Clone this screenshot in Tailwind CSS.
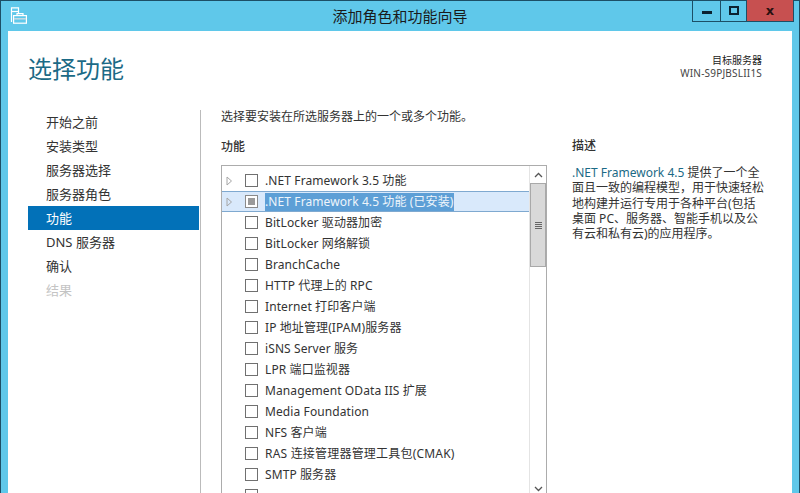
<!DOCTYPE html>
<html lang="zh-CN">
<head>
<meta charset="UTF-8">
<title>添加角色和功能向导</title>
<script src="https://cdn.jsdelivr.net/npm/@tailwindcss/browser@4"></script>
</head>
<body class="w-[800px] h-[493px] overflow-hidden bg-[#5fc8ea] font-['Noto_Sans','Noto_Sans_CJK_SC',sans-serif] text-[12px] text-[#333]">
  <div class="h-[493px] flex flex-col border-l border-t border-r border-[#1c4f66]">
    <!-- Title bar -->
    <div class="relative h-[30px] shrink-0 flex items-center justify-center text-[15px] text-[#1a1a1a]">
      <svg class="absolute left-[9px] top-[6px]" width="17" height="17" viewBox="0 0 17 17" fill="none" stroke="#fff" stroke-width="1.2">
        <path d="M1.5 15V0.8H8.5V6"/>
        <path d="M1.5 4.5H8.5"/>
        <rect x="3.6" y="8.6" width="12.8" height="7.6" fill="#5fc8ea"/>
        <path d="M7 8.5V6.6H13V8.5"/>
        <path d="M4 11.8H16" stroke="#c4dbe4" stroke-width="1.6"/>
      </svg>
      <span>添加角色和功能向导</span>
      <div class="absolute right-[5px] top-[-1px] flex h-[22px] border border-t-0 border-[#1c4f66]">
        <div class="w-[28px] flex items-center justify-center border-r border-[#1c4f66]"><div class="w-[10px] h-[3px] mt-[3px] bg-[#0b2230]"></div></div>
        <div class="w-[26px] flex items-center justify-center border-r border-[#1c4f66]"><div class="w-[10px] h-[9px] border-2 border-[#0b2230]"></div></div>
        <div class="w-[46px] flex items-center justify-center bg-[#c75050] font-bold text-[13px] text-[#2a1010] font-['DejaVu_Sans',sans-serif]">x</div>
      </div>
    </div>
    <!-- Window body -->
    <div class="flex-1 min-h-0 mx-[7px] bg-white overflow-hidden">
      <div class="h-[79px] flex justify-between pl-[20px] pr-[30px]">
        <h1 class="mt-[20px] text-[24px] leading-[36px] text-[#1b6a86]">选择功能</h1>
        <div class="mt-[23px] text-right text-[10px] leading-[13px]">
          <div class="text-[#222]">目标服务器</div>
          <div class="text-[#444] tracking-[0.2px]">WIN-S9PJBSLII1S</div>
        </div>
      </div>
      <div class="flex">
        <!-- Steps -->
        <ul class="w-[171px] ml-[20px] shrink-0">
          <li class="h-[24px] pl-[18px] leading-[24px] text-[13px]">开始之前</li>
          <li class="h-[24px] pl-[18px] leading-[24px] text-[13px]">安装类型</li>
          <li class="h-[24px] pl-[18px] leading-[24px] text-[13px]">服务器选择</li>
          <li class="h-[24px] pl-[18px] leading-[24px] text-[13px]">服务器角色</li>
          <li class="h-[24px] pl-[18px] leading-[24px] text-[13px] bg-[#0271b8] text-white">功能</li>
          <li class="h-[24px] pl-[18px] leading-[24px] text-[13px]">DNS 服务器</li>
          <li class="h-[24px] pl-[18px] leading-[24px] text-[13px]">确认</li>
          <li class="h-[24px] pl-[18px] leading-[24px] text-[13px] text-[#c4c4c4]">结果</li>
        </ul>
        <!-- Main -->
        <div class="flex-1 h-[400px] ml-px border-l border-[#bbb] pl-[20px] flex">
          <div class="w-[326px] shrink-0">
            <p class="mt-[-2px] leading-[18px] text-[#333]">选择要安装在所选服务器上的一个或多个功能。</p>
            <h2 class="mt-[12px] font-medium leading-[18px] text-[#333]">功能</h2>
            <div class="mt-[9px] h-[340px] border border-[#acacac] flex overflow-hidden">
              <div class="flex-1 pt-[4px] overflow-hidden tracking-[0.1px]">
                <div class="h-[21px] flex items-center">
                  <svg class="ml-[4px] mr-[12px]" width="7" height="10" viewBox="0 0 7 10" fill="none" stroke="#a6a6a6"><path d="M1 1L5.5 5L1 9Z"/></svg>
                  <div class="w-[13px] h-[13px] border border-[#707070] mr-[7px]"></div><span>.NET Framework 3.5 功能</span>
                </div>
                <div class="h-[21px] flex items-center bg-[#d9e9fb] border-y border-[#7fa9d0]">
                  <svg class="ml-[4px] mr-[12px]" width="7" height="10" viewBox="0 0 7 10" fill="none" stroke="#a6a6a6"><path d="M1 1L5.5 5L1 9Z"/></svg>
                  <div class="w-[13px] h-[13px] border border-[#8a8a8a] mr-[7px] flex items-center justify-center bg-white"><div class="w-[7px] h-[7px] bg-[#9a9a9a]"></div></div><span class="bg-[#5d9fd6] text-[#eef5fb]">.NET Framework 4.5 功能 (已安装)</span>
                </div>
                <div class="h-[21px] flex items-center pl-[23px]"><div class="w-[13px] h-[13px] border border-[#707070] mr-[7px]"></div><span>BitLocker 驱动器加密</span></div>
                <div class="h-[21px] flex items-center pl-[23px]"><div class="w-[13px] h-[13px] border border-[#707070] mr-[7px]"></div><span>BitLocker 网络解锁</span></div>
                <div class="h-[21px] flex items-center pl-[23px]"><div class="w-[13px] h-[13px] border border-[#707070] mr-[7px]"></div><span>BranchCache</span></div>
                <div class="h-[21px] flex items-center pl-[23px]"><div class="w-[13px] h-[13px] border border-[#707070] mr-[7px]"></div><span>HTTP 代理上的 RPC</span></div>
                <div class="h-[21px] flex items-center pl-[23px]"><div class="w-[13px] h-[13px] border border-[#707070] mr-[7px]"></div><span>Internet 打印客户端</span></div>
                <div class="h-[21px] flex items-center pl-[23px]"><div class="w-[13px] h-[13px] border border-[#707070] mr-[7px]"></div><span>IP 地址管理(IPAM)服务器</span></div>
                <div class="h-[21px] flex items-center pl-[23px]"><div class="w-[13px] h-[13px] border border-[#707070] mr-[7px]"></div><span>iSNS Server 服务</span></div>
                <div class="h-[21px] flex items-center pl-[23px]"><div class="w-[13px] h-[13px] border border-[#707070] mr-[7px]"></div><span>LPR 端口监视器</span></div>
                <div class="h-[21px] flex items-center pl-[23px]"><div class="w-[13px] h-[13px] border border-[#707070] mr-[7px]"></div><span>Management OData IIS 扩展</span></div>
                <div class="h-[21px] flex items-center pl-[23px]"><div class="w-[13px] h-[13px] border border-[#707070] mr-[7px]"></div><span>Media Foundation</span></div>
                <div class="h-[21px] flex items-center pl-[23px]"><div class="w-[13px] h-[13px] border border-[#707070] mr-[7px]"></div><span>NFS 客户端</span></div>
                <div class="h-[21px] flex items-center pl-[23px]"><div class="w-[13px] h-[13px] border border-[#707070] mr-[7px]"></div><span class="tracking-[0.2px]">RAS 连接管理器管理工具包(CMAK)</span></div>
                <div class="h-[21px] flex items-center pl-[23px]"><div class="w-[13px] h-[13px] border border-[#707070] mr-[7px]"></div><span>SMTP 服务器</span></div>
                <div class="h-[21px] flex items-center pl-[23px]"><div class="w-[13px] h-[13px] border border-[#707070] mr-[7px]"></div></div>
              </div>
              <!-- Scrollbar -->
              <div class="w-[17px] shrink-0 border-l border-[#e4e4e4] flex flex-col">
                <div class="h-[17px] flex items-center justify-center"><svg width="9" height="6" viewBox="0 0 9 6" fill="none" stroke="#555" stroke-width="1.3"><path d="M1 5L4.5 1.5L8 5"/></svg></div>
                <div class="h-[84px] bg-[#d9d9d9] border border-[#a9a9a9] flex flex-col items-center justify-center gap-px">
                  <div class="w-[7px] h-px bg-[#666]"></div><div class="w-[7px] h-px bg-[#666]"></div><div class="w-[7px] h-px bg-[#666]"></div><div class="w-[7px] h-px bg-[#666]"></div>
                </div>
                <div class="mt-[213px] h-[17px] flex items-center justify-center"><svg width="9" height="6" viewBox="0 0 9 6" fill="none" stroke="#555" stroke-width="1.3"><path d="M1 1L4.5 4.5L8 1"/></svg></div>
              </div>
            </div>
          </div>
          <!-- Description -->
          <div class="ml-[25px] w-[195px] pt-[27px]">
            <h2 class="font-medium leading-[18px]">描述</h2>
            <p class="mt-[10px] leading-[15.25px]"><span class="text-[#1b6a86]">.NET Framework 4.5</span> 提供了一个全面且一致的编程模型，用于快速轻松地构建并运行专用于各种平台(包括桌面 PC、服务器、智能手机以及公有云和私有云)的应用程序。</p>
          </div>
        </div>
      </div>
    </div>
  </div>
</body>
</html>
